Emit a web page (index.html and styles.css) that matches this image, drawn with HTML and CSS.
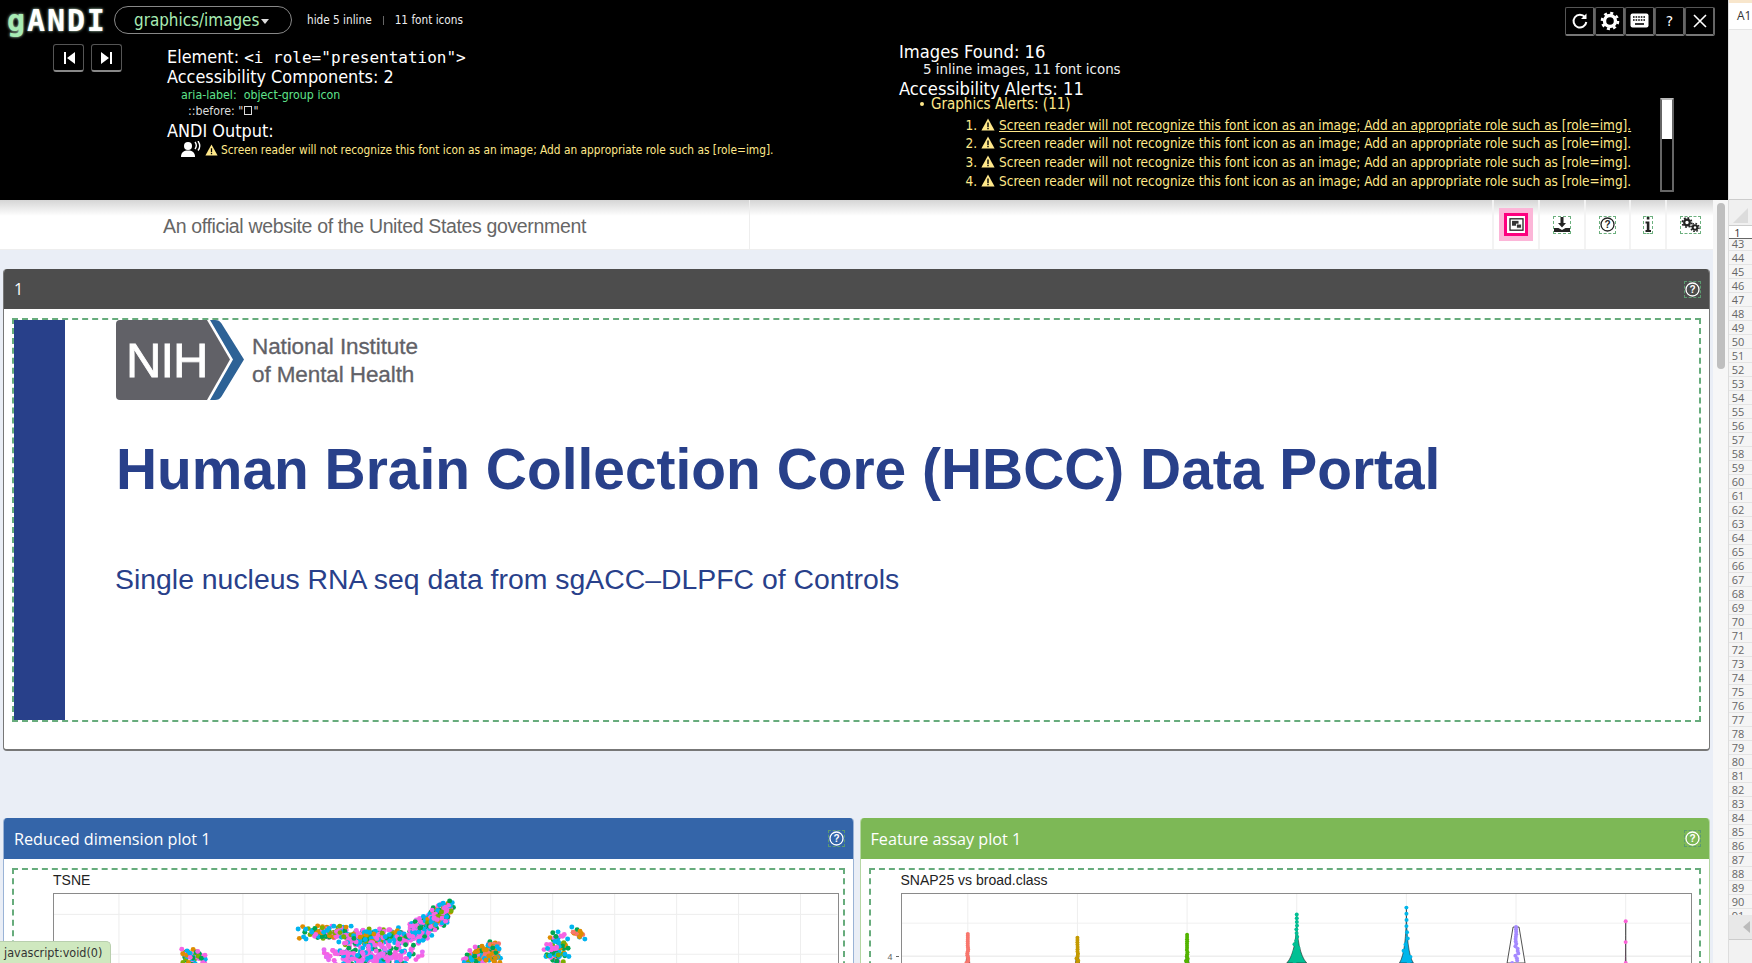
FILE: index.html
```html
<!DOCTYPE html>
<html lang="en">
<head>
  <meta charset="UTF-8">
  <title>HBCC Data Portal</title>
  <link rel="stylesheet" href="styles.css">
</head>
<body>
  <div class="main">
    <div class="andi">
      <div class="andi-head">
        <span class="logo"><span class="logo-g">g</span>ANDI</span>
        <span class="module">graphics/images<span class="caret"></span></span>
        <span class="head-link">hide 5 inline</span>
        <span class="head-sep"></span>
        <span class="head-link">11 font icons</span>
        <div class="tools">
          <button class="tool"><svg width="18" height="18" viewBox="0 0 18 18"><path d="M14 5.200A6.400 6.400 0 1 0 15.300 10" fill="none" stroke="#fff" stroke-width="2"/><path d="M15.500 1.500v5.600H10z" fill="#fff"/></svg></button>
          <button class="tool"><svg width="20" height="20" viewBox="0 0 20 20"><circle cx="10" cy="10" r="5.500" fill="none" stroke="#fff" stroke-width="3.400"/><circle cx="10" cy="10" r="8" fill="none" stroke="#fff" stroke-width="2.600" stroke-dasharray="3 3.280"/></svg></button>
          <button class="tool"><svg width="19" height="16" viewBox="0 0 19 16"><rect x="0.500" y="0.500" width="18" height="14" rx="2" fill="#fff"/><path d="M3 4h13M3 7h13" stroke="#000" stroke-width="1.600" stroke-dasharray="1.600 1"/><path d="M5 11h9" stroke="#000" stroke-width="1.600"/></svg></button>
          <button class="tool tool-text">?</button>
          <button class="tool"><svg width="14" height="14" viewBox="0 0 14 14"><path d="M1 1l12 12M13 1L1 13" stroke="#fff" stroke-width="1.600"/></svg></button>
        </div>
      </div>
      <div class="andi-body">
        <div class="nav">
          <button class="nav-btn"><svg width="14" height="14" viewBox="0 0 14 14"><path d="M2 1h2v12H2zM13 1v12L5 7z" fill="#fff"/></svg></button>
          <button class="nav-btn"><svg width="14" height="14" viewBox="0 0 14 14"><path d="M12 1h-2v12h2zM1 1v12l8-6z" fill="#fff"/></svg></button>
        </div>
        <div class="element">
          <div class="el-line">Element: <code>&lt;i role="presentation"&gt;</code></div>
          <div class="el-line">Accessibility Components: 2</div>
          <div class="el-aria">aria-label:&nbsp; object-group icon</div>
          <div class="el-before">::before: "<span class="tofu"></span>"</div>
          <div class="el-line el-output">ANDI Output:</div>
          <div class="el-alert">
            <svg class="speaker" width="20" height="17" viewBox="0 0 20 17"><circle cx="7" cy="5" r="4" fill="#fff"/><path d="M0 16c0-5 3-6.500 7-6.500s7 1.500 7 6.500z" fill="#fff"/><path d="M14 1c1.500 2 1.500 5 0 7M17 0c2 3 2 7 0 9.500" fill="none" stroke="#fff" stroke-width="1.400"/></svg>
            <svg class="warn" viewBox="0 0 14 13"><path d="M7 .5 13.600 12.500H.4z" fill="#ffe88a"/><path d="M6.300 4.500h1.400v4.500H6.300zM6.300 9.800h1.400v1.400H6.300z" fill="#000"/></svg>
            Screen reader will not recognize this font icon as an image; Add an appropriate role such as [role=img].
          </div>
        </div>
        <div class="results">
          <div class="res-title">Images Found: 16</div>
          <div class="res-sub">5 inline images, 11 font icons</div>
          <div class="res-title res-alerts">Accessibility Alerts: 11</div>
          <div class="res-group"><span class="bullet"></span>Graphics Alerts: (11)</div>
          <ol class="alert-list">
            <li><svg class="warn" viewBox="0 0 14 13"><path d="M7 .5 13.600 12.500H.4z" fill="#ffe88a"/><path d="M6.300 4.500h1.400v4.500H6.300zM6.300 9.800h1.400v1.400H6.300z" fill="#000"/></svg><a class="first">Screen reader will not recognize this font icon as an image; Add an appropriate role such as [role=img].</a></li>
            <li><svg class="warn" viewBox="0 0 14 13"><path d="M7 .5 13.600 12.500H.4z" fill="#ffe88a"/><path d="M6.300 4.500h1.400v4.500H6.300zM6.300 9.800h1.400v1.400H6.300z" fill="#000"/></svg><a>Screen reader will not recognize this font icon as an image; Add an appropriate role such as [role=img].</a></li>
            <li><svg class="warn" viewBox="0 0 14 13"><path d="M7 .5 13.600 12.500H.4z" fill="#ffe88a"/><path d="M6.300 4.500h1.400v4.500H6.300zM6.300 9.800h1.400v1.400H6.300z" fill="#000"/></svg><a>Screen reader will not recognize this font icon as an image; Add an appropriate role such as [role=img].</a></li>
            <li><svg class="warn" viewBox="0 0 14 13"><path d="M7 .5 13.600 12.500H.4z" fill="#ffe88a"/><path d="M6.300 4.500h1.400v4.500H6.300zM6.300 9.800h1.400v1.400H6.300z" fill="#000"/></svg><a>Screen reader will not recognize this font icon as an image; Add an appropriate role such as [role=img].</a></li>
          </ol>
          <div class="list-scroll"><div class="list-thumb"></div></div>
        </div>
      </div>
    </div>

    <div class="page">
      <div class="page-inner">
        <div class="gov">
          <div class="gov-text">An official website of the United States government</div>
          <div class="gov-tools">
            <div class="gov-tool"><span class="hl"><svg width="15" height="13" viewBox="0 0 18 16"><rect x="1" y="1" width="16" height="14" fill="#fff" stroke="#222" stroke-width="1.600"/><rect x="3.500" y="3.500" width="8" height="6" fill="#333"/><rect x="9" y="7.500" width="6" height="5" fill="#333" stroke="#fff"/></svg></span></div>
            <div class="gov-tool"><span class="tag"><svg width="16" height="15" viewBox="0 0 16 15"><path d="M6.500 0h3v6h2.500L8 10.500 4 6h2.500z" fill="#222"/><path d="M0 11h4.500L8 13l3.500-2H16v4H0z" fill="#222"/></svg></span></div>
            <div class="gov-tool"><span class="tag"><svg width="15" height="15" viewBox="0 0 15 15"><circle cx="7.500" cy="7.500" r="6.500" fill="none" stroke="#222" stroke-width="1.300"/><text x="7.500" y="11" text-anchor="middle" class="q-mark">?</text></svg></span></div>
            <div class="gov-tool"><span class="tag"><svg width="8" height="15" viewBox="-1 0 8 15"><path d="M1.800 0h2.600v2.600H1.800zM.5 4.500h3.900V13H6v2H.5v-2h1.300V6.500H.5z" fill="#222"/></svg></span></div>
            <div class="gov-tool"><span class="tag"><svg width="19" height="15" viewBox="0 0 19 15"><circle cx="6" cy="5.500" r="2.800" fill="none" stroke="#222" stroke-width="2.200"/><circle cx="6" cy="5.500" r="4.600" fill="none" stroke="#222" stroke-width="1.800" stroke-dasharray="1.800 1.800"/><circle cx="14" cy="10.500" r="2.300" fill="none" stroke="#222" stroke-width="2"/><circle cx="14" cy="10.500" r="4" fill="none" stroke="#222" stroke-width="1.500" stroke-dasharray="1.600 1.540"/></svg></span></div>
          </div>
        </div>

        <section class="box box-dark">
          <header class="box-head">1<span class="help"><svg width="15" height="15" viewBox="0 0 15 15"><circle cx="7.500" cy="7.500" r="6.500" fill="none" stroke="#fff" stroke-width="1.300"/><text x="7.500" y="11" text-anchor="middle" class="q-mark q-white">?</text></svg></span></header>
          <div class="box-body">
            <div class="dash banner">
              <div class="banner-bar"></div>
              <div class="banner-main">
                <div class="nih">
                  <svg width="129" height="80" viewBox="0 0 129 80">
                    <path d="M4 0H91L114 39.500 91 80H4a4 4 0 0 1-4-4V4a4 4 0 0 1 4-4z" fill="#616167"/>
                    <path d="M94 0h5c3 0 5 1 6.500 3.500L128 39.500 105.500 76.500C104 79 102 80 99 80h-5l23-40.500z" fill="#2d6296"/>
                    <text x="10" y="57" class="nih-mark">NIH</text>
                  </svg>
                  <div class="nih-name">National Institute<br>of Mental Health</div>
                </div>
                <h1 class="title">Human Brain Collection Core (HBCC) Data Portal</h1>
                <p class="subtitle">Single nucleus RNA seq data from sgACC–DLPFC of Controls</p>
              </div>
            </div>
          </div>
        </section>

        <div class="plots">
          <section class="box box-blue">
            <header class="box-head">Reduced dimension plot 1<span class="help"><svg width="15" height="15" viewBox="0 0 15 15"><circle cx="7.500" cy="7.500" r="6.500" fill="none" stroke="#fff" stroke-width="1.300"/><text x="7.500" y="11" text-anchor="middle" class="q-mark q-white">?</text></svg></span></header>
            <div class="box-body">
              <div class="dash plot-wrap plot-wrap-l">
                <div class="plot-title">TSNE</div>
                <svg id="tsne" class="plot" viewBox="0 0 784 71" preserveAspectRatio="none"></svg>
              </div>
            </div>
          </section>
          <section class="box box-green">
            <header class="box-head">Feature assay plot 1<span class="help"><svg width="15" height="15" viewBox="0 0 15 15"><circle cx="7.500" cy="7.500" r="6.500" fill="none" stroke="#fff" stroke-width="1.300"/><text x="7.500" y="11" text-anchor="middle" class="q-mark q-white">?</text></svg></span></header>
            <div class="box-body">
              <div class="dash plot-wrap plot-wrap-r">
                <div class="plot-title">SNAP25 vs broad.class</div>
                <div class="plot-row">
                  <div class="y-axis"><span class="y-tick">4</span></div>
                  <svg id="violin" class="plot" viewBox="0 0 792 71" preserveAspectRatio="none"></svg>
                </div>
              </div>
            </div>
          </section>
        </div>
      </div>
      <div class="page-scroll"><div class="page-thumb"></div></div>
      <div class="status">javascript:void(0)</div>
    </div>
  </div>

  <aside class="sheet">
    <div class="sheet-top"></div>
    <div class="sheet-cell">A1</div>
    <div class="sheet-mid"></div>
    <div class="sheet-corner"><div class="corner-tri"></div></div>
    <div class="row-first">1</div>
    <div id="rows" class="rows"></div>
    <div class="sheet-arrow"><div class="arrow-tri"></div></div>
    <div class="sheet-foot"></div>
  </aside>
  <script src="script.js"></script>
</body>
</html>
```

FILE: styles.css
```css
* {
  box-sizing: border-box;
}
html, body {
  height: 100%;
}
body {
  margin: 0;
  display: flex;
  height: 963px;
  overflow: hidden;
  font-family: "Liberation Sans", Arial, sans-serif;
  background: #fff;
}
.main {
  width: 1728px;
  display: flex;
  flex-direction: column;
}

/* ANDI bar */
.andi {
  height: 200px;
  background: #000;
  color: #fff;
  font-family: "DejaVu Sans", sans-serif;
  font-stretch: condensed;
  position: relative;
  z-index: 2;
}
.andi-head {
  display: flex;
  align-items: center;
  height: 36px;
  padding: 4px 13px 0 7px;
}
.logo {
  font-family: "DejaVu Sans Mono", monospace;
  font-stretch: normal;
  font-weight: bold;
  font-size: 30px;
  color: #fff;
  text-shadow: 0 0 3px #bde8c8;
  width: 107px;
  letter-spacing: 1.900px;
}
.logo-g {
  color: #a8ecb4;
}
.module {
  display: flex;
  align-items: center;
  width: 178px;
  height: 28px;
  border: 1px solid #888;
  border-radius: 14px;
  padding-left: 19px;
  font-size: 16.900px;
  color: #a8ecb4;
}
.caret {
  margin: 3px 0 0 2px;
  border-left: 4.500px solid transparent;
  border-right: 4.500px solid transparent;
  border-top: 5px solid #ddd;
}
.head-link {
  font-size: 11.700px;
  color: #eee;
  margin-left: 15px;
}
.head-sep {
  width: 1px;
  height: 9px;
  background: #666;
  margin-left: 11px;
  margin-right: -4px;
}
.tools {
  margin-left: auto;
  display: flex;
  margin-top: 2px;
}
.tool {
  width: 30px;
  height: 29px;
  padding: 0;
  display: flex;
  align-items: center;
  justify-content: center;
  background: #000;
  border: 1px solid #555;
  border-bottom: 2px solid #777;
  border-right: 2px solid #666;
  border-radius: 2px;
  color: #fff;
}
.tool-text {
  font-size: 14px;
  font-family: "DejaVu Sans", sans-serif;
}
.andi-body {
  display: flex;
}
.nav {
  display: flex;
  gap: 7px;
  width: 167px;
  padding: 8px 0 0 53px;
}
.nav-btn {
  width: 31px;
  height: 28px;
  padding: 0;
  display: flex;
  align-items: center;
  justify-content: center;
  background: #000;
  border: 1px solid #555;
  border-bottom: 2px solid #888;
  border-radius: 3px;
}
.element {
  width: 732px;
  padding-top: 11px;
}
.el-line {
  font-size: 17.900px;
  line-height: 19px;
}
.el-line code {
  font-family: "DejaVu Sans Mono", monospace;
  font-stretch: normal;
  font-size: 16px;
}
.el-aria {
  font-size: 12.300px;
  line-height: 16px;
  color: #5fe38c;
  margin: 1px 0 0 14px;
}
.el-before {
  font-size: 12.300px;
  line-height: 16px;
  color: #ddd;
  margin-left: 21px;
}
.tofu {
  display: inline-block;
  width: 8px;
  height: 9px;
  margin: 0 1px;
  border: 1px solid #ddd;
}
.el-output {
  margin-top: 2px;
}
.el-alert {
  display: flex;
  align-items: center;
  font-size: 11.800px;
  line-height: 16px;
  color: #ffe88a;
  margin: 1px 0 0 14px;
  white-space: nowrap;
}
.speaker {
  margin-right: 4px;
}
.warn {
  width: 13px;
  height: 12px;
  margin-right: 3px;
  flex: none;
}
.results {
  position: relative;
  padding-top: 6px;
  flex: 1;
}
.res-title {
  font-size: 18.200px;
  line-height: 19px;
}
.res-sub {
  font-size: 14.900px;
  line-height: 16px;
  margin-left: 24px;
  color: #eee;
}
.res-alerts {
  margin-top: 1.500px;
}
.res-group {
  font-size: 15px;
  line-height: 13px;
  color: #ffe88a;
  margin-left: 21px;
  display: flex;
  align-items: center;
}
.bullet {
  width: 4px;
  height: 4px;
  border-radius: 50%;
  background: #ffe88a;
  margin-right: 7px;
}
.alert-list {
  margin: 5px 0 0 0;
  padding-left: 82px;
  font-size: 13.500px;
  color: #ffe88a;
  width: 760px;
}
.alert-list li {
  height: 18.700px;
  line-height: 18.700px;
  white-space: nowrap;
}
.alert-list .warn {
  width: 14px;
  height: 13px;
  vertical-align: -1px;
  margin-right: 4px;
}
.first {
  text-decoration: underline;
}
.list-scroll {
  position: absolute;
  left: 761px;
  top: 62px;
  width: 14px;
  height: 94px;
  border: 2px solid #666;
  border-top-color: #bbb;
  background: #000;
  border-radius: 1px;
}
.list-thumb {
  height: 39px;
  background: #fff;
}

/* portal page */
.page {
  flex: 1;
  position: relative;
  display: flex;
  background: #eaeef6;
  overflow: hidden;
}
.page-inner {
  flex: 1;
  min-width: 0;
  padding-right: 3px;
}
.page-scroll {
  width: 15px;
  padding: 3px 3px 0 4px;
  background: #f7f7f7;
}
.page-thumb {
  height: 166px;
  background: #bfbfbf;
  border-radius: 4px;
}
.gov {
  height: 50px;
  background: linear-gradient(#d5d5d5, #fff 16px);
  display: flex;
  align-items: center;
  border-bottom: 1px solid #eee;
  margin-right: -3px;
}
.gov-text {
  width: 750px;
  height: 100%;
  display: flex;
  align-items: center;
  padding: 4px 0 0 163px;
  font-size: 19.500px;
  letter-spacing: -.35px;
  color: #666;
  border-right: 1px solid #eee;
  white-space: nowrap;
}
.gov-tools {
  margin-left: auto;
  display: flex;
  height: 100%;
}
.gov-tool {
  display: flex;
  align-items: center;
  justify-content: center;
  height: 100%;
  width: 46px;
  border-left: 2px solid #f3f3f3;
}
.gov-tool:nth-child(3) {
  width: 45px;
}
.gov-tool:nth-child(4) {
  width: 36px;
}
.gov-tool:nth-child(5) {
  width: 48px;
}
.tag {
  display: flex;
  align-items: center;
  justify-content: center;
  outline: 1px dashed #6cb07e;
  min-height: 16px;
}
.hl {
  display: flex;
  align-items: center;
  justify-content: center;
  width: 24px;
  height: 23px;
  background: #fff;
  border: 3px solid #fd007f;
  box-shadow: 0 0 0 5px #fcb6d8;
}
.q-mark {
  font-family: "Liberation Sans", sans-serif;
  font-weight: bold;
  font-size: 10px;
  fill: #222;
}
.q-white {
  fill: #fff;
}
.box {
  background: #fff;
  border: 1px solid #999;
  border-top: 0;
  border-radius: 4px;
  overflow: hidden;
}
.box-head {
  height: 41px;
  padding: 0 9px 0 10px;
  display: flex;
  align-items: center;
  justify-content: space-between;
  color: #fff;
  font-family: "Open Sans", sans-serif;
  font-size: 16.200px;
}
.box-dark {
  margin: 19px 0 0 3px;
  height: 482px;
  border-color: #777;
  border-width: 0 1px 2px 1px;
}
.box-dark .box-head {
  height: 40px;
  background: #4d4d4d;
}
.help {
  display: flex;
  outline: 1px dashed #5c9a70;
}
.box-body {
  padding: 9px 8px;
}
.dash {
  border: 2px dashed #67ac7c;
}
.banner {
  display: flex;
  height: 404px;
}
.banner-bar {
  width: 51px;
  background: #28408a;
}
.banner-main {
  flex: 1;
  padding-left: 51px;
}
.nih {
  display: flex;
  align-items: center;
}
.nih-name {
  margin: 2px 0 0 7px;
  font-size: 22.500px;
  line-height: 28px;
  color: #616167;
  letter-spacing: -.1px;
  -webkit-text-stroke: .3px #616167;
}
.nih-mark {
  font-family: "Liberation Sans", sans-serif;
  font-size: 49px;
  fill: #fff;
  stroke: #fff;
  stroke-width: .8px;
  letter-spacing: -1px;
}
.title {
  margin: 37px 0 0 0;
  font-size: 56.900px;
  line-height: 64px;
  font-weight: bold;
  color: #28408a;
  white-space: nowrap;
}
.subtitle {
  margin: 60px 0 0 -1px;
  font-size: 28.400px;
  line-height: 36px;
  color: #28408a;
}
.plots {
  display: flex;
  gap: 6px;
  margin: 67px 0 0 3px;
}
.plots .box {
  flex: 1;
  height: 160px;
  border-radius: 4px 4px 0 0;
  border-bottom: 0;
}
.box-blue {
  border-color: #9ab3d6;
}
.box-blue .box-head {
  background: #3465a9;
}
.box-green {
  border-color: #b5d6a3;
}
.box-green .box-head {
  background: #7db856;
}
.plot-wrap {
  height: 120px;
  border-bottom: 0;
}
.plot-wrap-l {
  padding-left: 39px;
  padding-right: 4px;
}
.plot-wrap-r {
  padding-left: 30px;
  padding-right: 7px;
}
.plot-title {
  font-size: 14px;
  line-height: 16px;
  padding-top: 2px;
  height: 23px;
  color: #222;
}
.plot {
  display: block;
  width: 100%;
  height: 71px;
  border: 1px solid #8a8a8a;
  background: #fff;
}
.plot-row {
  position: relative;
}
.y-axis {
  position: absolute;
  left: -13px;
  top: 59px;
  font-size: 9px;
  line-height: 10px;
  color: #666;
}
.y-tick::after {
  content: "";
  display: inline-block;
  width: 3px;
  height: 1px;
  margin-left: 3px;
  vertical-align: 3px;
  background: #666;
}
.status {
  position: absolute;
  left: 0;
  bottom: 0;
  height: 22px;
  width: 111px;
  padding: 3px 0 0 4px;
  font-family: "DejaVu Sans", sans-serif;
  font-stretch: condensed;
  font-size: 12.500px;
  white-space: nowrap;
  color: #333;
  background: #cfe8bf;
  border: 1px solid #b9cfae;
  border-bottom: 0;
  border-left: 0;
  border-radius: 0 5px 0 0;
}

/* spreadsheet side strip */
.sheet {
  width: 24px;
  background: #f5f5f5;
  font-family: "Open Sans", sans-serif;
  color: #666;
  display: flex;
  flex-direction: column;
  overflow: hidden;
  border-left: 1px solid #ddd;
}
.sheet-top {
  height: 3px;
  background: #f8e6cc;
}
.sheet-cell {
  height: 27px;
  padding: 6px 0 0 8px;
  font-size: 12px;
  line-height: 14px;
  color: #333;
  background: #fff;
  border-bottom: 1px solid #e5e5e5;
  white-space: nowrap;
}
.sheet-mid {
  height: 170px;
  background: #f5f5f5;
  border-bottom: 1px solid #ccc;
}
.sheet-corner {
  height: 26px;
  padding: 8px 0 0 4px;
  background: #f0f0f0;
  border-bottom: 1px solid #ccc;
}
.corner-tri {
  width: 0;
  height: 0;
  border-left: 15px solid transparent;
  border-bottom: 15px solid #dcdcdc;
}
.row-first {
  height: 13px;
  font-size: 11px;
  line-height: 13px;
  text-align: center;
  padding-right: 6px;
  color: #333;
  border-bottom: 1px solid #666;
  background: #fff;
}
.rows {
  flex: 1;
  overflow: hidden;
}
.row-num {
  height: 14px;
  line-height: 14px;
  font-size: 11px;
  text-align: center;
  padding-right: 5px;
  border-bottom: 1px solid #e4e4e4;
}
.row-num:first-child {
  height: 12px;
  line-height: 10px;
}
.sheet-arrow {
  height: 25px;
  flex: none;
  padding: 6px 0 0 14px;
  background: #e8e8e8;
  border-bottom: 1px solid #ccc;
}
.arrow-tri {
  width: 0;
  height: 0;
  border-top: 6px solid transparent;
  border-bottom: 6px solid transparent;
  border-right: 7px solid #bbb;
}
.sheet-foot {
  height: 23px;
  flex: none;
  background: #f2f2f2;
}
```

FILE: script.js
```js
// seeded so every load draws the same dots
var seed = 7;
function rnd() {
  seed = (seed * 16807) % 2147483647;
  return seed / 2147483647;
}

var NS = "http://www.w3.org/2000/svg";
function add(svg, tag, attrs) {
  var el = document.createElementNS(NS, tag);
  for (var k in attrs) el.setAttribute(k, attrs[k]);
  svg.appendChild(el);
  return el;
}

// TSNE
var tsne = document.getElementById("tsne");
for (var gx = 65; gx < 784; gx += 62) {
  add(tsne, "line", { x1: gx, x2: gx, y1: 0, y2: 71, stroke: "#eee" });
}
add(tsne, "line", { x1: 0, x2: 784, y1: 21, y2: 21, stroke: "#eee" });
add(tsne, "line", { x1: 0, x2: 784, y1: 62, y2: 62, stroke: "#eee" });

var mixed = ["#de8c00", "#00b4f0", "#00b4f0", "#00a651", "#7cae00", "#f564e3", "#f564e3"];
var pinkish = ["#f564e3", "#f564e3", "#f564e3", "#e76bf3", "#00a651", "#00b4f0"];
var warm = ["#de8c00", "#de8c00", "#f8766d", "#00b4f0", "#00a651"];
// x, y, spread x, spread y, slope, count, palette (plot pixels)
var clusters = [
  [272, 40, 28, 8, 0, 130, mixed],
  [320, 45, 38, 10, -.1, 170, mixed],
  [318, 64, 55, 14, 0, 220, pinkish],
  [368, 36, 28, 14, -.6, 200, pinkish],
  [385, 22, 16, 12, -.6, 130, mixed],
  [425, 62, 20, 12, -.6, 90, mixed],
  [438, 62, 10, 12, 0, 70, warm],
  [503, 55, 14, 19, 0, 70, mixed],
  [525, 41, 11, 5, .6, 14, warm],
  [140, 66, 14, 11, 0, 50, mixed]
];
clusters.forEach(function (c) {
  for (var i = 0; i < c[5]; i++) {
    var dx = (rnd() + rnd() - 1) * c[2];
    var dy = (rnd() + rnd() - 1) * c[3] + dx * c[4];
    add(tsne, "circle", {
      cx: c[0] + dx, cy: c[1] + dy, r: 2.500,
      fill: c[6][Math.floor(rnd() * c[6].length)]
    });
  }
});

// violins, one per class: x, top, colour, half width at the cut, dots
var violin = document.getElementById("violin");
add(violin, "line", { x1: 0, x2: 792, y1: 30, y2: 30, stroke: "#f0f0f0" });
add(violin, "line", { x1: 0, x2: 792, y1: 64, y2: 64, stroke: "#eee", "stroke-width": 1.500 });
var violins = [
  [66, 41, "#f8766d", 2, 16],
  [176, 45, "#c49a00", 2, 12],
  [286, 42, "#53b400", 2, 14],
  [396, 21, "#00c094", 10, 14],
  [506, 14, "#00b6eb", 7, 10],
  [616, 34, "#a58aff", 9, 16],
  [726, 28, "#fb61d7", 0.400, 3]
];
violins.forEach(function (v) {
  var x = v[0], top = v[1];
  add(violin, "line", { x1: x, x2: x, y1: 0, y2: 71, stroke: "#eee" });
  if (v[2] == "#a58aff") {
    add(violin, "path", {
      d: "M" + (x - 3) + " " + top + "h6L" + (x + v[3]) + " 71H" + (x - v[3]) + "z",
      fill: "#fff", stroke: "#222", "stroke-width": .8
    });
  } else {
    add(violin, "path", {
      d: "M" + x + " " + top + "Q" + x + " 60 " + (x + v[3]) + " 71H" + (x - v[3]) + "Q" + x + " 60 " + x + " " + top + "z",
      fill: v[2], stroke: "#222", "stroke-width": .6
    });
  }
  for (var i = 0; i < v[4]; i++) {
    var t = i / (v[4] - 1);
    add(violin, "circle", {
      cx: x + (rnd() - .5) * 1.500 * v[3] * t * t,
      cy: top + t * (71 - top),
      r: 2, fill: v[2]
    });
  }
});

// row numbers of the spreadsheet strip
var rows = document.getElementById("rows");
for (var r = 43; r <= 91; r++) {
  var d = document.createElement("div");
  d.className = "row-num";
  d.textContent = r;
  rows.appendChild(d);
}
```
